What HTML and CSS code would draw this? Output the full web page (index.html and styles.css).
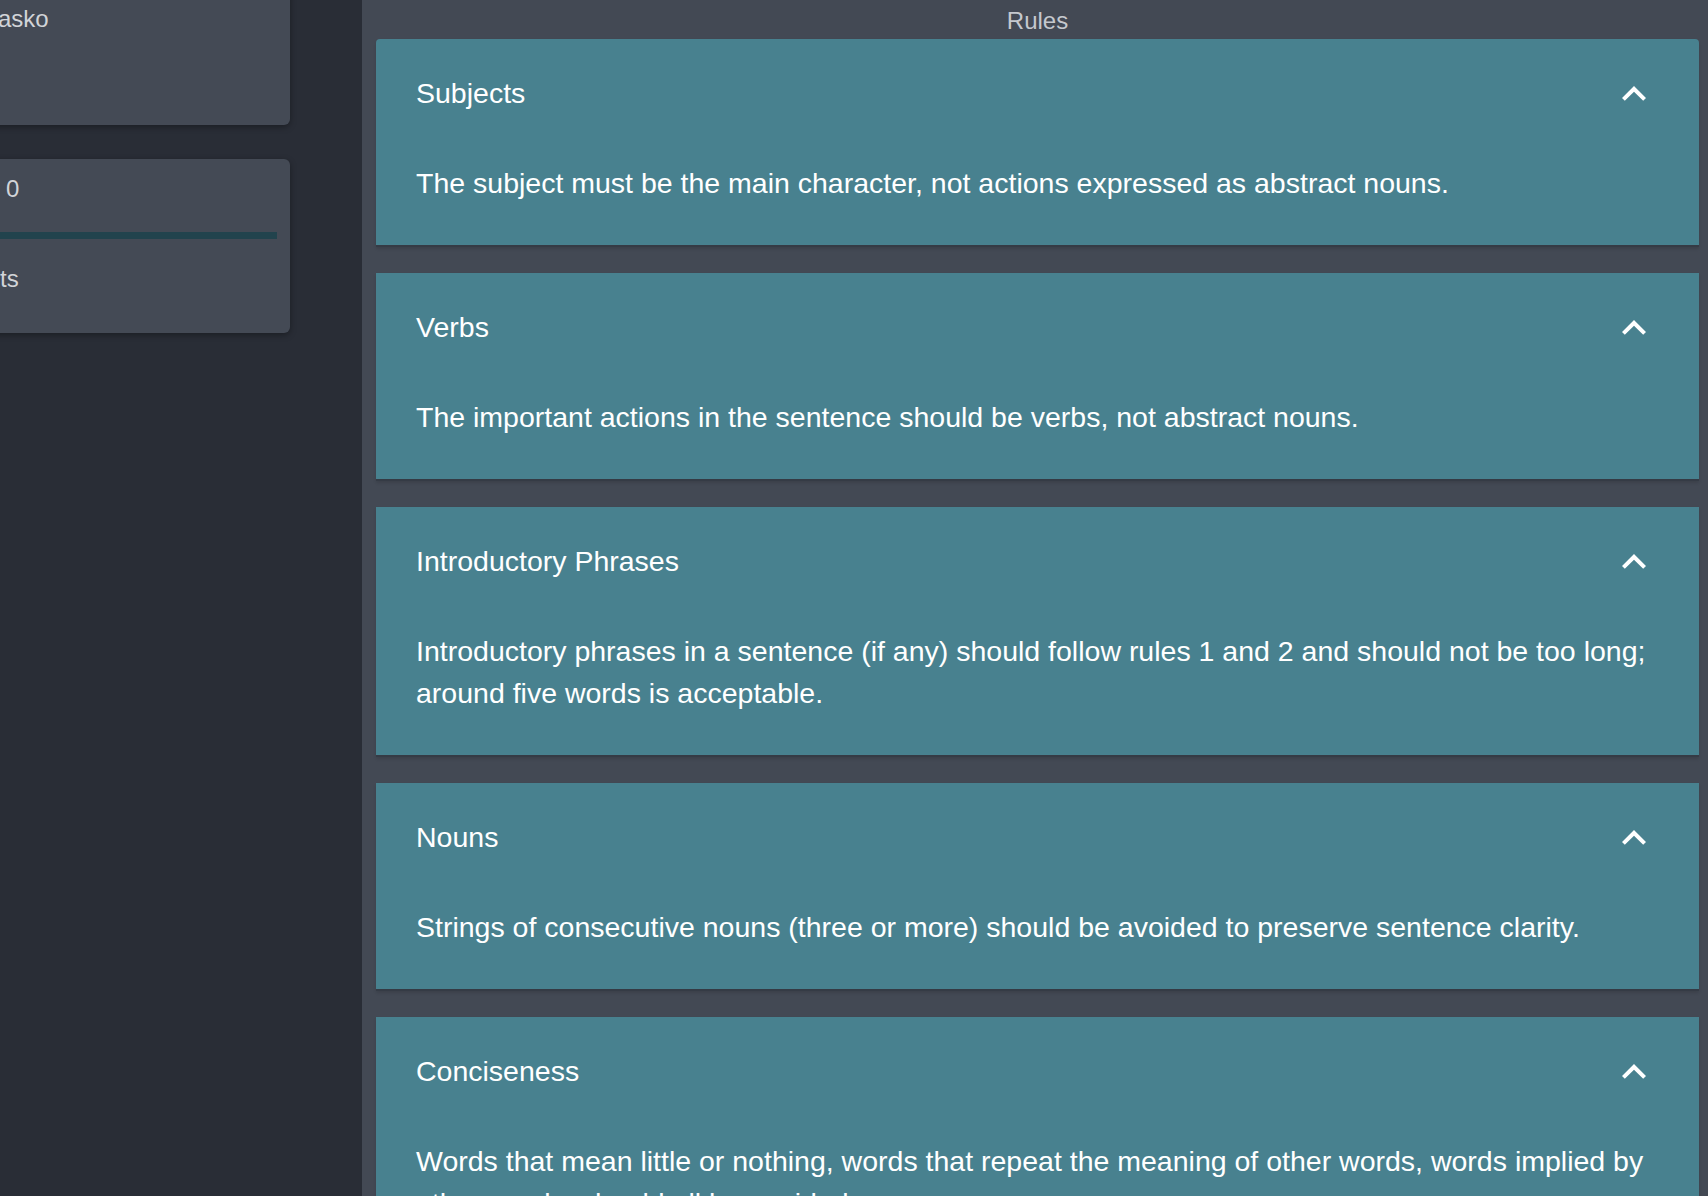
FILE: index.html
```html
<!DOCTYPE html>
<html lang="en">
<head>
<meta charset="utf-8">
<title>Rules</title>
<link rel="stylesheet" href="styles.css">
</head>
<body>
<div class="layout">
  <aside class="sidebar">
    <div class="card card-user">
      <div class="card-text name">asko</div>
    </div>
    <div class="card card-stats">
      <div class="card-text score">0</div>
      <div class="progress"><div class="progress-fill" style="width:100%"></div></div>
      <div class="card-text label">ts</div>
    </div>
  </aside>
  <main class="main">
    <h1 class="main-title">Rules</h1>
    <section class="panel">
      <div class="panel-header">
        <span class="panel-title">Subjects</span>
        <svg class="chevron" viewBox="0 0 24 24"><path d="M12 8l-6 6 1.41 1.41L12 10.83l4.59 4.58L18 14z"/></svg>
      </div>
      <p class="panel-body">The subject must be the main character, not actions expressed as abstract nouns.</p>
    </section>
    <section class="panel">
      <div class="panel-header">
        <span class="panel-title">Verbs</span>
        <svg class="chevron" viewBox="0 0 24 24"><path d="M12 8l-6 6 1.41 1.41L12 10.83l4.59 4.58L18 14z"/></svg>
      </div>
      <p class="panel-body">The important actions in the sentence should be verbs, not abstract nouns.</p>
    </section>
    <section class="panel">
      <div class="panel-header">
        <span class="panel-title">Introductory Phrases</span>
        <svg class="chevron" viewBox="0 0 24 24"><path d="M12 8l-6 6 1.41 1.41L12 10.83l4.59 4.58L18 14z"/></svg>
      </div>
      <p class="panel-body">Introductory phrases in a sentence (if any) should follow rules 1 and 2 and should not be too long; around five words is acceptable.</p>
    </section>
    <section class="panel">
      <div class="panel-header">
        <span class="panel-title">Nouns</span>
        <svg class="chevron" viewBox="0 0 24 24"><path d="M12 8l-6 6 1.41 1.41L12 10.83l4.59 4.58L18 14z"/></svg>
      </div>
      <p class="panel-body">Strings of consecutive nouns (three or more) should be avoided to preserve sentence clarity.</p>
    </section>
    <section class="panel">
      <div class="panel-header">
        <span class="panel-title">Conciseness</span>
        <svg class="chevron" viewBox="0 0 24 24"><path d="M12 8l-6 6 1.41 1.41L12 10.83l4.59 4.58L18 14z"/></svg>
      </div>
      <p class="panel-body">Words that mean little or nothing, words that repeat the meaning of other words, words implied by other words, should all be avoided.</p>
    </section>
  </main>
</div>
</body>
</html>
```

FILE: styles.css
```css
* { box-sizing: border-box; }
html, body {
  margin: 0;
  padding: 0;
  height: 100%;
  overflow: hidden;
}
body {
  font-family: "Liberation Sans", Arial, sans-serif;
  background: #434954;
}
.layout {
  display: flex;
  height: 1196px;
}
.sidebar {
  width: 362px;
  flex: 0 0 362px;
  background: #292d36;
  display: flex;
  flex-direction: column;
  gap: 34px;
}
.card {
  width: 310px;
  margin-left: -20px;
  background: #444a55;
  border-radius: 6px;
  box-shadow: 0 2px 6px rgba(0, 0, 0, 0.35);
  padding-left: 20px;
}
.card-text {
  color: #d2d4d8;
  font-size: 24px;
  line-height: 28px;
}
.card-user {
  height: 145px;
  margin-top: -20px;
  padding-top: 20px;
}
.name {
  margin-left: -2px;
  padding-top: 5px;
}
.card-stats {
  height: 174px;
  padding-top: 16px;
}
.score {
  padding-left: 6px;
}
.progress {
  margin-top: 29px;
  margin-right: 13px;
  height: 7px;
  background: #22434d;
}
.progress-fill {
  height: 100%;
  background: #22434d;
}
.label {
  margin-top: 26px;
}
.main {
  flex: 1;
  background: #434954;
  padding: 0 9px 0 14px;
  display: flex;
  flex-direction: column;
}
.main-title {
  margin: 0;
  padding-top: 3px;
  height: 39px;
  line-height: 36px;
  font-size: 24px;
  font-weight: normal;
  text-align: center;
  color: #c5c8ce;
}
.panel {
  background: #48818f;
  color: #ffffff;
  padding: 30px 41px 41px 40px;
  border-bottom: 2px solid #353b45;
  box-shadow: 0 2px 3px rgba(0, 0, 0, 0.12);
  margin-bottom: 26px;
}
.panel:first-of-type {
  border-top-left-radius: 4px;
  border-top-right-radius: 4px;
}
.panel-header {
  height: 48px;
  display: flex;
  align-items: center;
  justify-content: space-between;
}
.panel-title {
  font-size: 28.5px;
  line-height: 42px;
}
.chevron {
  width: 48px;
  height: 48px;
  fill: #ffffff;
  flex: 0 0 48px;
  position: relative;
  top: 1px;
}
.panel-body {
  margin: 45px 0 0 0;
  font-size: 28.5px;
  line-height: 42px;
}
```
